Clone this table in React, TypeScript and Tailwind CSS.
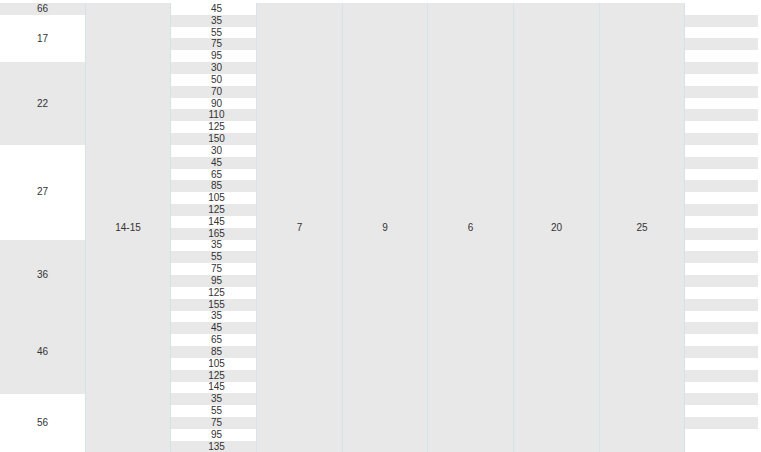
const groups = [
  { label: "66", h: "h-[11.84px]", bg: "bg-[#e8e8e8]", values: ["45"] },
  { label: "17", h: "h-[47.36px]", bg: "bg-white", values: ["35", "55", "75", "95"] },
  { label: "22", h: "h-[82.88px]", bg: "bg-[#e8e8e8]", values: ["30", "50", "70", "90", "110", "125", "150"] },
  { label: "27", h: "h-[94.72px]", bg: "bg-white", values: ["30", "45", "65", "85", "105", "125", "145", "165"] },
  { label: "36", h: "h-[71.04px]", bg: "bg-[#e8e8e8]", values: ["35", "55", "75", "95", "125", "155"] },
  { label: "46", h: "h-[82.88px]", bg: "bg-[#e8e8e8]", values: ["35", "45", "65", "85", "105", "125", "145"] },
  { label: "56", h: "h-[59.2px]", bg: "bg-white", values: ["35", "55", "75", "95", "135"] },
];

const rows = groups.flatMap((g) => g.values);

const spanCols = [
  { text: "14-15", w: "w-[85px]" },
  { text: "7", w: "w-[86px]" },
  { text: "9", w: "w-[85px]" },
  { text: "6", w: "w-[86px]" },
  { text: "20", w: "w-[86px]" },
  { text: "25", w: "w-[85px]" },
];

function SpanCell({ text, w }: { text: string; w: string }) {
  return (
    <div className={`${w} shrink-0 flex items-center justify-center bg-[#e8e8e8] border-r border-[#d3e3e9]`}>
      {text}
    </div>
  );
}

export default function App() {
  return (
    <div className="w-[761px] h-[452px] overflow-hidden bg-white pt-[3px] text-[10px] leading-none text-[#333] font-['Liberation_Sans',Arial,sans-serif]">
      <div className="flex h-[449.92px]">
        {/* first column: grouped values */}
        <div className="w-[86px] shrink-0 flex flex-col border-r border-[#d3e3e9]">
          {groups.map((g) => (
            <div key={g.label} className={`${g.h} ${g.bg} shrink-0 flex items-center justify-center`}>
              {g.label}
            </div>
          ))}
        </div>

        <SpanCell text={spanCols[0].text} w={spanCols[0].w} />

        {/* striped value column */}
        <div className="w-[86px] shrink-0 flex flex-col border-r border-[#d3e3e9]">
          {rows.map((v, i) => (
            <div
              key={i}
              className={`h-[11.84px] shrink-0 flex items-center justify-center pl-[6px] ${i % 2 === 0 ? "bg-white" : "bg-[#e8e8e8]"}`}
            >
              {v}
            </div>
          ))}
        </div>

        {spanCols.slice(1).map((c) => (
          <SpanCell key={c.text} text={c.text} w={c.w} />
        ))}

        {/* last striped column */}
        <div className="w-[73px] shrink-0 flex flex-col">
          {rows.slice(0, 37).map((_, i) => (
            <div key={i} className={`h-[11.84px] shrink-0 ${i % 2 === 0 ? "bg-white" : "bg-[#e8e8e8]"}`} />
          ))}
        </div>
      </div>
    </div>
  );
}
